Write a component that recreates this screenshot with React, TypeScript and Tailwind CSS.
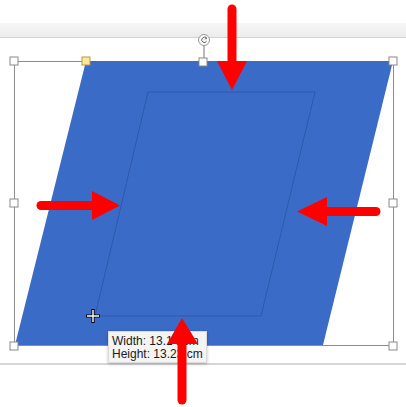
import React from 'react';

const Handle: React.FC<{ x: number; y: number; fill?: string; stroke?: string }> = ({ x, y, fill = '#ffffff', stroke = '#8a8a8a' }) => (
  <rect x={x - 4} y={y - 4} width={8} height={8} fill={fill} stroke={stroke} strokeWidth={1} />
);

const App: React.FC = () => {
  return (
    <div className="relative w-[406px] h-[407px] bg-white overflow-hidden font-['Liberation_Sans',sans-serif]">
      {/* window chrome */}
      <div className="flex flex-col h-full">
        <div className="h-[23px] bg-white" />
        <div className="h-[15px] bg-gradient-to-b from-[#f6f6f6] to-[#ececec] border-b border-[#d2d2d2]" />
        <div className="flex-1 bg-white" />
        <div className="h-[2px] bg-[#d6d6d6]" />
        <div className="h-[42px] bg-white" />
      </div>

      {/* slide canvas drawing */}
      <svg className="absolute inset-0" width={406} height={407} viewBox="0 0 406 407">
        {/* selection box */}
        <rect x={14.5} y={61.5} width={379} height={284} fill="none" stroke="#8c8c8c" strokeWidth={1} />
        {/* shape */}
        <polygon points="86,61 393,61 323,345 15,345" fill="#3a6bc7" />
        <polygon points="148,92 315,92 261,316 95,316" fill="none" stroke="#2c55a3" strokeWidth={0.8} />

        {/* rotate handle */}
        <line x1={204} y1={45} x2={204} y2={58} stroke="#777" strokeWidth={1} />
        <circle cx={204} cy={40} r={5.5} fill="#fafafa" stroke="#9a9a9a" strokeWidth={1} />
        <path d="M206.3 38.2 A2.6 2.6 0 1 0 206.6 41.2" fill="none" stroke="#666" strokeWidth={1} />
        <path d="M205.2 36.8 L207 38.4 L204.8 39" fill="none" stroke="#666" strokeWidth={0.9} />

        {/* handles */}
        <Handle x={14} y={61} />
        <Handle x={203} y={62} />
        <Handle x={393} y={61} />
        <Handle x={14} y={203} />
        <Handle x={393} y={203} />
        <Handle x={14} y={346} />
        <Handle x={393} y={346} />
        <Handle x={86} y={61} fill="#fbe89a" stroke="#b39a4a" />

        {/* crosshair cursor */}
        <g>
          <path d="M93 309 V323 M86 316 H100" stroke="#000" strokeWidth={3.2} />
          <path d="M93 310 V322 M87 316 H99" stroke="#fff" strokeWidth={1.4} />
        </g>
      </svg>

      {/* size tooltip */}
      <div className="absolute left-[108px] top-[331px] w-[99px] h-[32px] bg-[#f4f4f4] border border-[#dcdcdc] shadow-[0_1px_3px_rgba(0,0,0,0.25)] px-[3px] pt-[3px] text-[12px] leading-[12.5px] text-[#1a1a1a]">
        <div>Width: 13.14 cm</div>
        <div>Height: 13.23 cm</div>
      </div>

      {/* annotation arrows */}
      <svg className="absolute inset-0" width={406} height={407} viewBox="0 0 406 407">
        <g fill="#ff0000" stroke="#ff0000" strokeLinecap="round">
          {/* top */}
          <line x1={232} y1={9} x2={232} y2={64} strokeWidth={9} />
          <polygon points="217,61 247,61 232,90" strokeWidth={0} />
          {/* bottom */}
          <line x1={182} y1={400} x2={182} y2={343} strokeWidth={9} />
          <polygon points="167,344 198,344 182,318" strokeWidth={0} />
          {/* left */}
          <line x1={41} y1={205.5} x2={94} y2={205.5} strokeWidth={9} />
          <polygon points="92,191 92,220 120,205.5" strokeWidth={0} />
          {/* right */}
          <line x1={376} y1={211.5} x2={326} y2={211.5} strokeWidth={9} />
          <polygon points="327,197 327,226 297,211.5" strokeWidth={0} />
        </g>
      </svg>
    </div>
  );
};

export default App;
